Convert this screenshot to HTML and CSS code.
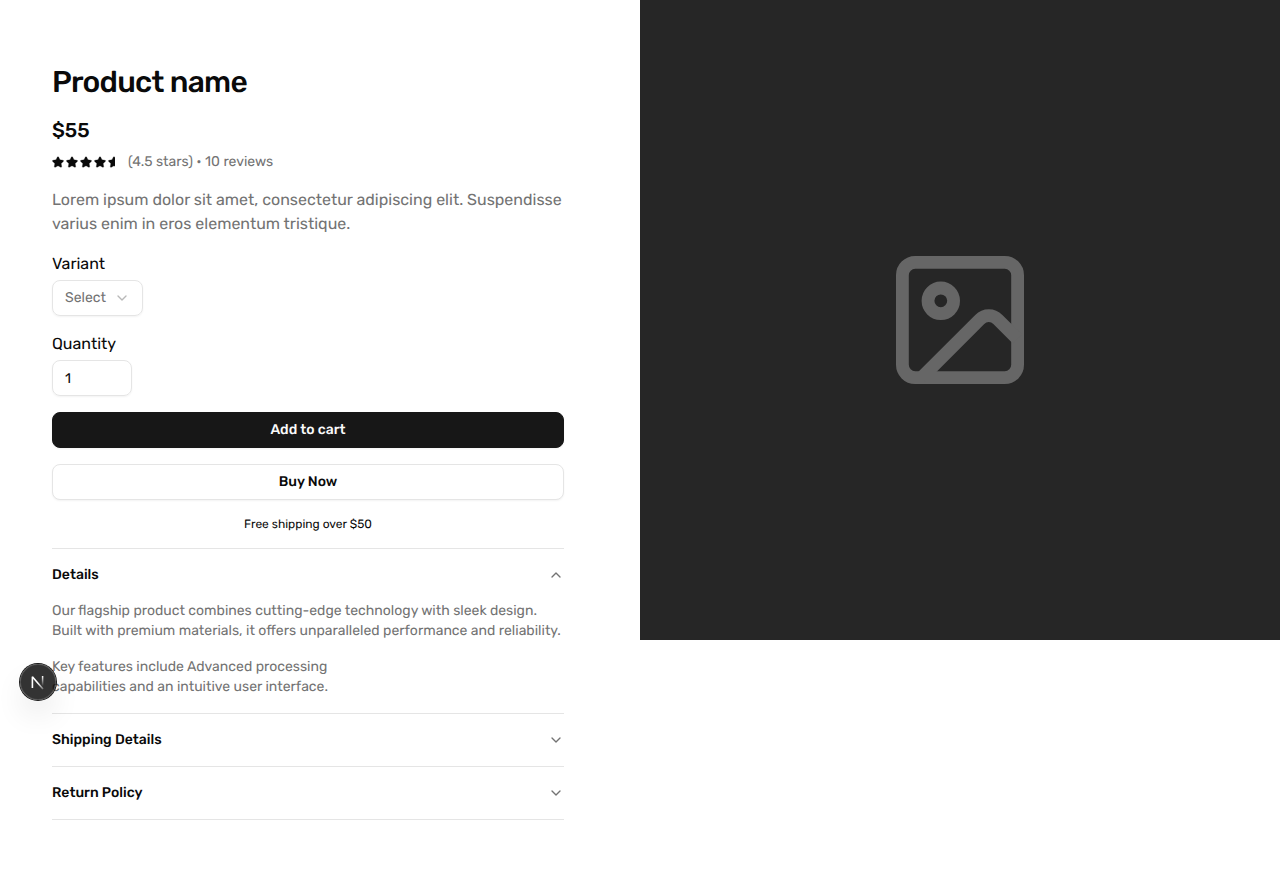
FILE: index.html
```html
<!DOCTYPE html>
<html lang="en">
<head>
<meta charset="utf-8">
<title>Product</title>
<link rel="stylesheet" href="styles.css">
</head>
<body>
<svg class="defs" width="0" height="0">
  <symbol id="star" viewBox="0 -32 576 576"><path fill="currentColor" stroke="currentColor" stroke-width="12" d="M259.300 17.800L194 150.200 47.900 171.500c-26.200 3.800-36.700 36.100-17.700 54.600l105.700 103-25 145.500c-4.500 26.300 23.200 46 46.400 33.700L288 439.600l130.700 68.700c23.200 12.200 50.900-7.400 46.400-33.700l-25-145.500 105.700-103c19-18.500 8.500-50.800-17.700-54.600L382 150.200 316.700 17.800c-11.700-23.600-45.600-23.900-57.400 0z"/></symbol>
  <symbol id="down" viewBox="0 0 24 24"><path d="m6 9 6 6 6-6" fill="none" stroke="currentColor" stroke-width="2" stroke-linecap="round" stroke-linejoin="round"/></symbol>
</svg>
<main class="page">
  <section class="info">
    <h1 class="title">Product name</h1>
    <div class="price">$55</div>
    <div class="rating">
      <div class="stars">
        <svg><use href="#star"/></svg><svg><use href="#star"/></svg><svg><use href="#star"/></svg><svg><use href="#star"/></svg><span class="half"><svg><use href="#star"/></svg></span>
      </div>
      <span>(4.5 stars) • 10 reviews</span>
    </div>
    <p class="lead">Lorem ipsum dolor sit amet, consectetur adipiscing elit. Suspendisse<br>varius enim in eros elementum tristique.</p>
    <div class="field">
      <label>Variant</label>
      <div class="control select"><span>Select</span><svg><use href="#down"/></svg></div>
    </div>
    <div class="field">
      <label>Quantity</label>
      <div class="control qty"><span>1</span></div>
    </div>
    <button class="btn primary">Add to cart</button>
    <button class="btn outline">Buy Now</button>
    <p class="note">Free shipping over $50</p>
    <div class="accordion">
      <div class="item">
        <div class="trigger"><span>Details</span><svg class="open"><use href="#down"/></svg></div>
        <div class="content">
          <p>Our flagship product combines cutting-edge technology with sleek design.<br>Built with premium materials, it offers unparalleled performance and reliability.</p>
          <p>Key features include Advanced processing<br>capabilities and an intuitive user interface.</p>
        </div>
      </div>
      <div class="item"><div class="trigger"><span>Shipping Details</span><svg><use href="#down"/></svg></div></div>
      <div class="item"><div class="trigger"><span>Return Policy</span><svg><use href="#down"/></svg></div></div>
    </div>
  </section>
  <div class="media">
    <svg class="image-icon" viewBox="0 0 20 20" fill="none" stroke="currentColor" stroke-width="2"><rect x="1" y="1" width="18" height="18" rx="2"/><circle cx="7" cy="7" r="2"/><path d="m19 13-3.086-3.086a2 2 0 0 0-2.828 0L4 19"/></svg>
  </div>
</main>
<div class="dev-badge">
  <svg width="36" height="36" viewBox="0 0 36 36" fill="none">
    <defs>
      <linearGradient id="g1" gradientUnits="userSpaceOnUse" x1="18" y1="19" x2="24" y2="26"><stop stop-color="#fff"/><stop offset="1" stop-color="#fff" stop-opacity="0.200"/></linearGradient>
      <linearGradient id="g2" gradientUnits="userSpaceOnUse" x1="22.500" y1="12" x2="22.500" y2="22"><stop stop-color="#fff"/><stop offset="1" stop-color="#fff" stop-opacity="0"/></linearGradient>
    </defs>
    <path d="M12.400 24V12.800L23 25" stroke="url(#g1)" stroke-width="1.600" stroke-linejoin="bevel"/>
    <path d="M22.600 12V23.500" stroke="url(#g2)" stroke-width="1.500"/>
  </svg>
</div>
</body>
</html>
```
FILE: styles.css
```css
* { box-sizing: border-box; margin: 0; padding: 0; }
body { background: #fff; color: #0a0a0a; font-family: Rubik, Roboto, sans-serif; font-size: 16px; line-height: 24px; text-rendering: geometricPrecision; }
.defs { position: absolute; }
.page { display: grid; grid-template-columns: 640px 640px; align-items: start; }
.info { display: flex; flex-direction: column; gap: 16px; padding: 64px 76px 64px 52px; white-space: nowrap; }
.title { font-size: 30px; line-height: 36px; font-weight: 500; letter-spacing: -0.025em; }
.price { font-size: 20px; line-height: 28px; font-weight: 500; }
.rating { display: flex; align-items: center; gap: 12px; margin-top: -8px; font-size: 14px; line-height: 20px; color: #737373; }
.stars { display: flex; gap: 2px; color: #0a0a0a; }
.stars svg { display: block; flex: none; width: 12px; height: 12px; }
.half { width: 6.500px; margin-right: 1.500px; overflow: hidden; }
.lead { color: #737373; }
.field { display: flex; flex-direction: column; align-items: flex-start; gap: 4px; }
.control { display: flex; align-items: center; gap: 8px; height: 36px; padding: 0 12px; border: 1px solid #e5e5e5; border-radius: 8px; box-shadow: 0 1px 2px rgba(0,0,0,.05); font-size: 14px; }
.select { width: 91px; color: #737373; }
.qty { width: 80px; padding-top: 1px; }
.select svg, .trigger svg { flex: none; width: 16px; height: 16px; color: #737373; }
.select svg { opacity: .5; }
.trigger svg { margin-top: 2px; }
.trigger .open { transform: rotate(180deg); }
.btn { height: 36px; border: 1px solid #e5e5e5; border-radius: 8px; background: #fff; box-shadow: 0 1px 2px rgba(0,0,0,.05); color: inherit; font: 500 14px/20px Rubik, Roboto, sans-serif; text-rendering: inherit; }
.primary { background: #171717; border-color: #171717; color: #fafafa; }
.note { font-size: 12px; line-height: 16px; text-align: center; }
.accordion { border-top: 1px solid #e5e5e5; font-size: 14px; line-height: 20px; }
.item { border-bottom: 1px solid #e5e5e5; }
.trigger { display: flex; justify-content: space-between; padding: 16px 0; font-weight: 500; }
.content { color: #737373; }
.content p { padding-bottom: 16px; }
.media { display: grid; place-items: center; height: 640px; background: #262626; }
.image-icon { width: 128px; height: 128px; color: #666; }
.dev-badge { position: absolute; left: 20px; top: 664px; display: grid; place-content: center; width: 36px; height: 36px; border-radius: 50%; background: rgba(0,0,0,.8); box-shadow: 0 0 0 1px #171717, inset 0 0 0 1px rgba(255,255,255,.14), 0 16px 32px -8px rgba(0,0,0,.24); }
```
